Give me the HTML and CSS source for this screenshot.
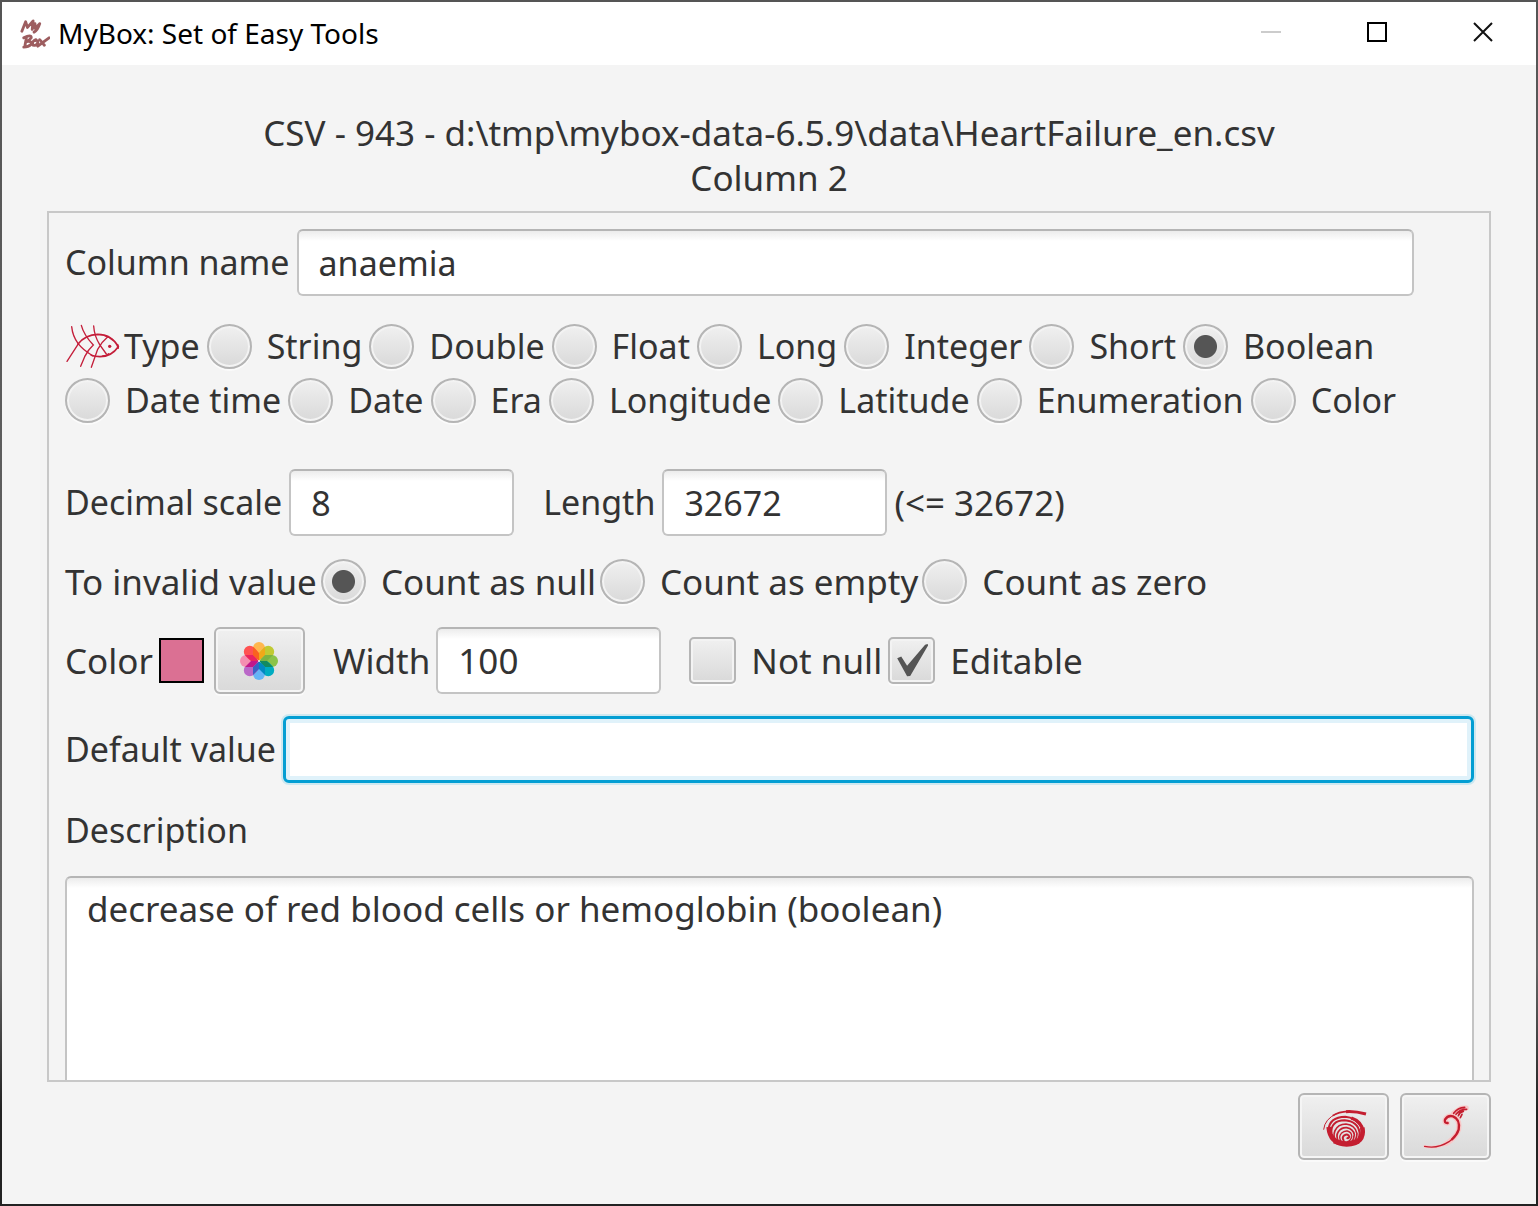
FILE: index.html
```html
<!DOCTYPE html>
<html lang="en">
<head>
<meta charset="utf-8">
<title>MyBox: Set of Easy Tools</title>
<link rel="stylesheet" href="styles.css">
</head>
<body>
<div class="window">
  <header class="titlebar">
    <svg class="logo" viewBox="0 0 32 34" aria-hidden="true">
      <g fill="none" stroke="#8c4144" stroke-width="3" stroke-linecap="round" stroke-linejoin="round" opacity="0.85">
        <path d="M2 14L6 4L8 10L14 3L13 12M16 6L16 11L21 6M21 6Q19 13 15 15"/>
        <path d="M7 20L5 31M4 21Q12 17 12 21Q10 24 7 25Q13 24 12 28Q9 31 4 31M17 23Q12 25 14 29Q18 30 19 26Q19 23 16 24M21 23L26 29M31 21L19 30"/>
      </g>
    </svg>
    <h1 class="app-name">MyBox: Set of Easy Tools</h1>
    <div class="window-controls">
      <button class="control" aria-label="Minimize" disabled><svg viewBox="0 0 20 20"><path d="M0 10H20" stroke="#ccc" stroke-width="2"/></svg></button>
      <button class="control" aria-label="Maximize"><svg viewBox="0 0 20 20"><rect x="1" y="1" width="18" height="18" fill="none" stroke="#000" stroke-width="2"/></svg></button>
      <button class="control" aria-label="Close"><svg viewBox="0 0 20 20"><path d="M1 1L19 19M19 1L1 19" stroke="#111" stroke-width="2"/></svg></button>
    </div>
  </header>

  <main class="content">
    <h2 class="heading">CSV - 943 - d:\tmp\mybox-data-6.5.9\data\HeartFailure_en.csv<br>Column 2</h2>

    <form class="panel">
      <div class="row name-row">
        <label for="name">Column name</label>
        <input class="field grow" id="name" type="text" value="anaemia">
      </div>

      <div class="types" role="radiogroup" aria-label="Type">
        <div class="options">
          <span class="type-label">
            <svg class="fish" viewBox="45 42 165 138" aria-hidden="true">
              <g fill="none" stroke="#c41e3a" stroke-linecap="round">
                <path stroke-width="4" d="M65 53Q68 82 84 103Q98 122 129 141M51 157L84 106"/>
                <path stroke-width="5" d="M84 105Q106 77 143 76Q184 76 205 113Q184 143 150 143Q134 143 124 139"/>
                <path stroke-width="4" d="M94 49Q101 77 130 108Q115 121 104 143L92 172M131 51Q133 81 149 107L169 135M175 82Q155 99 143 121L124 175"/>
                <path stroke-width="6" d="M203 108L204 117"/>
                <path stroke-width="4" d="M165 80Q178 84 188 92M158 141Q170 141 176 134"/>
              </g>
              <circle cx="179" cy="112" r="5" fill="#c41e3a"/>
            </svg>
            <span>Type</span>
          </span>
          <label class="option"><input type="radio" name="type">String</label>
          <label class="option"><input type="radio" name="type">Double</label>
          <label class="option"><input type="radio" name="type">Float</label>
          <label class="option"><input type="radio" name="type">Long</label>
          <label class="option"><input type="radio" name="type">Integer</label>
          <label class="option"><input type="radio" name="type">Short</label>
          <label class="option"><input type="radio" name="type" checked>Boolean</label>
        </div>
        <div class="options">
          <label class="option"><input type="radio" name="type">Date time</label>
          <label class="option"><input type="radio" name="type">Date</label>
          <label class="option"><input type="radio" name="type">Era</label>
          <label class="option"><input type="radio" name="type">Longitude</label>
          <label class="option"><input type="radio" name="type">Latitude</label>
          <label class="option"><input type="radio" name="type">Enumeration</label>
          <label class="option"><input type="radio" name="type">Color</label>
        </div>
      </div>

      <div class="row">
        <label for="scale">Decimal scale</label>
        <input class="field" id="scale" type="text" value="8">
        <label class="spaced" for="length">Length</label>
        <input class="field" id="length" type="text" value="32672">
        <span class="wide">(&lt;= 32672)</span>
      </div>

      <div class="row wide short" role="radiogroup" aria-label="To invalid value">
        <span>To invalid value</span>
        <label class="option"><input type="radio" name="invalid" checked>Count as null</label>
        <label class="option"><input type="radio" name="invalid">Count as empty</label>
        <label class="option"><input type="radio" name="invalid">Count as zero</label>
      </div>

      <div class="row wide">
        <span>Color</span>
        <span class="swatch"></span>
        <button class="push palette" type="button" aria-label="Choose color">
          <svg viewBox="0 0 40 40" width="40" height="40">
            <rect x="14" y="1" width="12" height="16" rx="6" fill="#ffb74d"/>
            <rect x="14" y="1" width="12" height="16" rx="6" fill="#c0ca33" transform="rotate(45 20 20)"/>
            <rect x="14" y="1" width="12" height="16" rx="6" fill="#8bc34a" transform="rotate(90 20 20)"/>
            <rect x="14" y="1" width="12" height="16" rx="6" fill="#00acc1" transform="rotate(135 20 20)"/>
            <rect x="14" y="1" width="12" height="16" rx="6" fill="#64b5f6" transform="rotate(180 20 20)"/>
            <rect x="14" y="1" width="12" height="16" rx="6" fill="#ba68c8" transform="rotate(225 20 20)"/>
            <rect x="14" y="1" width="12" height="16" rx="6" fill="#f48fb1" transform="rotate(270 20 20)"/>
            <rect x="14" y="1" width="12" height="16" rx="6" fill="#ff5252" transform="rotate(315 20 20)"/>
            <path d="M20 20L20 12L26 6L26 14Z" fill="#f0a818"/>
            <path d="M20 20L26 14L34 14L28 20Z" fill="#7cb342"/>
            <path d="M20 20L28 20L34 26L26 26Z" fill="#138a60"/>
            <path d="M20 20L26 26L26 34L20 28Z" fill="#0288c1"/>
            <path d="M20 20L20 28L14 34L14 26Z" fill="#3a62c4"/>
            <path d="M20 20L14 26L6 26L12 20Z" fill="#c2188b"/>
            <path d="M20 20L12 20L6 14L14 14Z" fill="#ea2360"/>
            <path d="M20 20L14 14L14 6L20 12Z" fill="#f9631f"/>
            <circle cx="20" cy="20" r="1" fill="#eee"/>
          </svg>
        </button>
        <label class="spaced" for="width">Width</label>
        <input class="field" id="width" type="text" value="100">
        <label class="option spaced"><input type="checkbox">Not null</label>
        <label class="option"><input type="checkbox" checked>Editable</label>
      </div>

      <div class="row">
        <label for="default">Default value</label>
        <input class="field grow focused" id="default" type="text">
      </div>

      <label class="description-label" for="description">Description</label>
      <textarea class="description wide" id="description">decrease of red blood cells or hemoglobin (boolean)</textarea>
    </form>

    <footer class="actions">
      <button class="push" type="button" aria-label="Recover">
        <svg viewBox="0 0 156 156" width="52" height="52">
          <g fill="none" stroke="#c41e30">
            <path stroke-width="3" d="M17 86Q20 54 56 38"/>
            <path stroke-width="5" d="M44 44Q62 32 90 31"/>
            <path stroke-width="9" d="M84 32Q110 30 144 39"/>
            <path stroke-width="6" d="M31 88Q34 48 82 47Q112 49 130 78"/>
            <path stroke-width="10" d="M100 51Q130 61 135 90"/>
            <path stroke-width="14" d="M133 80Q141 129 86 130Q36 128 32 78"/>
            <path stroke-width="6" d="M40 96Q38 59 80 58Q120 61 125 96Q124 114 112 124"/>
            <path stroke-width="5" d="M54 122Q44 106 51 89Q60 69 84 69Q112 72 117 98Q116 116 106 124"/>
            <path stroke-width="5" d="M62 122Q52 105 61 92Q70 79 86 80Q106 84 109 101Q108 116 100 124"/>
            <path stroke-width="4" d="M70 122Q60 108 70 97Q78 89 88 90Q102 94 101 107Q98 120 88 122"/>
            <path stroke-width="6" d="M78 120Q70 110 79 103Q91 97 94 107Q92 114 86 110"/>
            <path stroke-width="14" d="M48 120Q84 136 122 120"/>
          </g>
        </svg>
      </button>
      <button class="push" type="button" aria-label="OK">
        <svg viewBox="396 100 138 132" width="46" height="44">
          <g fill="none" stroke-linecap="round" stroke-linejoin="round">
            <path stroke="#f8c8c8" stroke-width="15" d="M470 154Q459 155 462 144Q470 130 486 134Q508 142 503 174Q493 201 465 216M488 124L510 110L526 109"/>
            <path stroke="#f8c8c8" stroke-width="8" d="M401 224Q440 232 474 211"/>
            <path stroke="#c41e2f" stroke-width="7" d="M470 154Q459 155 462 144Q470 130 486 134Q508 142 503 174Q498 190 483 203"/>
            <path stroke="#c41e2f" stroke-width="4" d="M401 224Q440 232 474 210L484 202"/>
            <path stroke="#c41e2f" stroke-width="5" d="M488 125Q500 108 521 107M495 128Q507 112 527 113M502 132Q506 121 517 119M508 138L513 128"/>
          </g>
        </svg>
      </button>
    </footer>
  </main>
</div>
</body>
</html>
```
FILE: styles.css
```css
* {
  box-sizing: border-box;
}

body {
  margin: 0;
  height: 100vh;
  padding: 2px;
  background: linear-gradient(#555 0, #666 80%, #222 92%);
  font-family: "Noto Sans", "Open Sans", sans-serif;
  font-size: 34px;
  line-height: 45px;
  color: #333;
}

.window {
  display: flex;
  flex-direction: column;
  height: 100%;
  background: #f4f4f4;
}

/* Title bar */
.titlebar {
  display: flex;
  align-items: center;
  height: 63px;
  flex: none;
  padding-left: 18px;
  background: #fff;
}

.logo {
  width: 30px;
  height: 34px;
}

.app-name {
  flex: 1;
  margin: 0 0 0 8px;
  font-size: 28px;
  font-weight: 400;
  color: #000;
}

.window-controls {
  display: flex;
}

.control {
  display: grid;
  place-items: center;
  width: 106px;
  height: 60px;
  padding: 0 0 4px;
  border: 0;
  background: none;
}

.control svg {
  width: 20px;
  height: 20px;
}

/* Page body */
.content {
  display: flex;
  flex: 1;
  flex-direction: column;
  min-height: 0;
  padding: 45px 45px 44px;
}

.heading {
  margin: 0 0 11px;
  font-size: 35px;
  font-weight: 400;
  text-align: center;
}

.panel {
  flex: 1;
  min-height: 0;
  padding: 16px 15px 0 16px;
  border: 2px solid #c8c8c8;
  overflow: hidden;
}

.row {
  display: flex;
  align-items: center;
  gap: 7px;
  height: 67px;
  margin-bottom: 22px;
  white-space: nowrap;
}

.wide {
  font-size: 35px;
}

.row.wide {
  gap: 6px;
}

.row.short {
  gap: 4px;
  height: 47px;
}

.name-row {
  padding-right: 60px;
}

.spaced {
  margin-left: 22px;
}

.types {
  padding-top: 1px;
  margin-bottom: 42px;
}

.options {
  display: flex;
  gap: 7px;
  height: 54px;
  align-items: center;
  white-space: nowrap;
}

.type-label {
  display: flex;
  align-items: center;
  gap: 4px;
}

.fish {
  width: 55px;
  height: 46px;
}

.option {
  display: flex;
  align-items: center;
  gap: 15px;
}

/* Controls */
.field,
.description {
  border: 2px solid #c4c4c4;
  border-top-color: #b5b5b5;
  border-radius: 6px;
  background: linear-gradient(#ececec, #fff 10px);
  font-family: inherit;
  line-height: inherit;
  color: inherit;
  outline: none;
}

.field {
  width: 225px;
  height: 67px;
  padding: 0 20px;
  font-size: inherit;
}

.field.grow {
  flex: 1;
  min-width: 0;
}

.field.focused {
  border: 3px solid #039ed3;
  background: #fff;
  box-shadow: 0 0 0 2px #cde8f0, inset 0 0 0 4px #e0f2fa;
}

input[type="radio"],
input[type="checkbox"] {
  appearance: none;
  flex: none;
  width: 45px;
  height: 45px;
  margin: 0;
  border: 2px solid #b5b5b5;
  border-radius: 50%;
  background: linear-gradient(#f0f0f0, #d9d9d9);
  box-shadow: inset 0 0 0 2px #f3f3f3, 0 2px 0 #fbfbfb;
}

input[type="radio"]:checked {
  background: radial-gradient(circle, #555 0 11px, transparent 12px), linear-gradient(#f0f0f0, #d9d9d9);
}

input[type="checkbox"] {
  width: 47px;
  height: 47px;
  border-radius: 5px;
}

input[type="checkbox"]:checked::before {
  content: "";
  display: block;
  width: 31px;
  height: 33px;
  margin: 5px 0 0 7px;
  background: #555;
  clip-path: polygon(0 43%, 13% 38%, 32% 66%, 90% 2%, 98% 0, 100% 4%, 42% 97%, 32% 98%);
}

.push {
  display: grid;
  place-items: center;
  width: 91px;
  height: 67px;
  padding: 0;
  border: 2px solid #b5b5b5;
  border-radius: 6px;
  background: linear-gradient(#f0f0f0, #d9d9d9);
  box-shadow: inset 0 0 0 2px #f5f5f5, 0 2px 0 #fafafa;
}

.palette {
  margin-left: 4px;
}

.swatch {
  width: 45px;
  height: 45px;
  border: 2px solid #000;
  background: #db7093;
}

.description-label {
  display: block;
  height: 71px;
  line-height: 51px;
}

.description {
  display: block;
  width: 100%;
  height: 300px;
  padding: 8px 20px;
  resize: none;
}

.actions {
  display: flex;
  justify-content: flex-end;
  gap: 11px;
  margin-top: 11px;
}
```
